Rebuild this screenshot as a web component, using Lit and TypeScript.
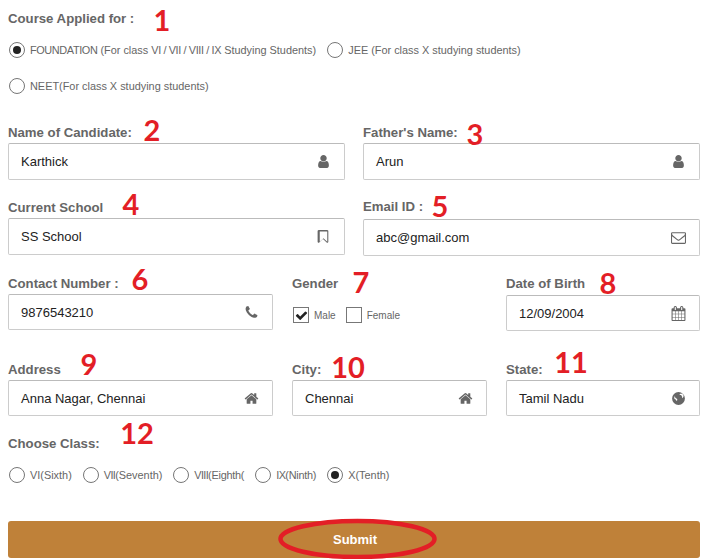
import { LitElement, html, css, svg } from "lit";
import { customElement } from "lit/decorators.js";

// font-awesome 4 glyphs, 1792 grid
const ICONS: Record<string, unknown> = {
  user: svg`<path d="M1536 1399q0 109-62.5 187t-150.5 78h-854q-88 0-150.5-78t-62.5-187q0-85 8.5-160.5t31.5-152 58.5-131 94-89 134.5-34.5q131 128 313 128t313-128q76 0 134.5 34.5t94 89 58.5 131 31.5 152 8.5 160.5zm-256-887q0 159-112.5 271.5t-271.5 112.5-271.5-112.5-112.5-271.5 112.5-271.5 271.5-112.5 271.5 112.5 112.5 271.5z"/>`,
  bookmark: svg`<path d="M1344 288h-896v1242l448-430 89 85 359 345v-1242zm12-160q23 0 44 9 33 13 52.5 41t19.5 62v1289q0 34-19.5 62t-52.5 41q-19 8-44 8-48 0-83-32l-441-424-441 424q-36 33-83 33-23 0-44-9-33-13-52.5-41t-19.5-62v-1289q0-34 19.5-62t52.5-41q21-9 44-9h1048z"/>`,
  phone: svg`<path d="M1600 1240q0 27-10 70.5t-21 68.5q-21 50-122 106-94 51-186 51-27 0-53-3.5t-57.5-12.5-47-14.5-55.5-20.5-49-18q-98-35-175-83-127-79-264-216t-216-264q-48-77-83-175-3-9-18-49t-20.5-55.5-14.5-47-12.5-57.5-3.5-53q0-92 51-186 56-101 106-122 25-11 68.5-21t70.5-10q14 0 21 3 18 6 53 76 11 19 30 54t35 63.5 31 53.5q3 4 17.5 25t21.5 35.5 7 28.5q0 20-28.5 50t-62 55-62 53-28.5 46q0 9 5 22.5t8.5 20.5 14 24 11.5 19q76 137 174 235t235 174q2 1 19 11.5t24 14 20.5 8.5 22.5 5q18 0 46-28.5t53-62 55-62 50-28.5q14 0 28.5 7t35.5 21.5 25 17.5q25 15 53.5 31t63.5 35 54 30q70 35 76 53 3 7 3 21z"/>`,
  envelope: svg`<path d="M1664 1504v-768q-32 36-69 66-268 206-426 338-51 43-83 67t-86.5 48.5-102.5 24.5h-2q-48 0-102.5-24.5t-86.5-48.5-83-67q-158-132-426-338-37-30-69-66v768q0 13 9.5 22.5t22.5 9.5h1472q13 0 22.5-9.5t9.5-22.5zm0-1051v-24.5l-.5-13-3-12.5-5.5-9-9-7.5-14-2.5h-1472q-13 0-22.5 9.5t-9.5 22.5q0 168 147 284 193 152 401 317 6 5 35 29.5t46 37.5 44.5 31.5 50.5 27.5 43 9h2q20 0 43-9t50.5-27.5 44.5-31.5 46-37.5 35-29.5q208-165 401-317 54-43 100.5-115.5t46.5-131.5zm128-37v1088q0 66-47 113t-113 47h-1472q-66 0-113-47t-47-113v-1088q0-66 47-113t113-47h1472q66 0 113 47t47 113z"/>`,
  calendar: svg`<path d="M192 1664h288v-288h-288v288zm352 0h320v-288h-320v288zm-352-352h288v-320h-288v320zm352 0h320v-320h-320v320zm-352-384h288v-288h-288v288zm736 736h320v-288h-320v288zm-384-736h320v-288h-320v288zm768 736h288v-288h-288v288zm-384-352h320v-320h-320v320zm-352-864v-288q0-13-9.5-22.5t-22.5-9.5h-64q-13 0-22.5 9.5t-9.5 22.5v288q0 13 9.5 22.5t22.5 9.5h64q13 0 22.5-9.5t9.5-22.5zm736 864h288v-320h-288v320zm-384-384h320v-288h-320v288zm384 0h288v-288h-288v288zm32-480v-288q0-13-9.5-22.5t-22.5-9.5h-64q-13 0-22.5 9.5t-9.5 22.5v288q0 13 9.5 22.5t22.5 9.5h64q13 0 22.5-9.5t9.5-22.5zm384-64v1280q0 52-38 90t-90 38h-1408q-52 0-90-38t-38-90v-1280q0-52 38-90t90-38h128v-96q0-66 47-113t113-47h64q66 0 113 47t47 113v96h384v-96q0-66 47-113t113-47h64q66 0 113 47t47 113v96h128q52 0 90 38t38 90z"/>`,
  home: svg`<path d="M1472 992v480q0 26-19 45t-45 19h-384v-384h-256v384h-384q-26 0-45-19t-19-45v-480q0-1 .5-3t.5-3l575-474 575 474q1 2 1 6zm223-69l-62 74q-8 9-21 11h-3q-13 0-21-7l-692-577-692 577q-12 8-24 7-13-2-21-11l-62-74q-8-10-7-23.5t11-21.5l719-599q32-26 76-26t76 26l244 204v-195q0-14 9-23t23-9h192q14 0 23 9t9 23v408l219 182q10 8 11 21.5t-7 23.5z"/>`,
  globe: svg`<path fill-rule="evenodd" d="M896 128a768 768 0 1 1 0 1536a768 768 0 1 1 0-1536zM1100 330q-110 40-70 130q70 40 150 20q30 70 100 70q-10 90 50 150q-20 100 30 170q120-110 150-280q-30-170-170-260q-110-30-240 0zM430 640q-60 120-30 260q60 100 180 120q-10 80 70 140q80 10 90-50q-30-80 20-130q-30-70-130-80q-40-70-110-60q10-110-90-200z"/>`,
};

type Field = { label: string; value: string; icon: string; cls?: string };

@customElement("app-root")
export class AppRoot extends LitElement {
  static styles = css`
    :host {
      display: block;
      position: relative;
      width: 701px;
      height: 559px;
      overflow: hidden;
      background: #fff;
      font-family: "Liberation Sans", Arial, sans-serif;
    }
    .form {
      padding: 10px 1px 0 8px;
    }
    .label {
      font-size: 13.2px;
      font-weight: bold;
      line-height: 18px;
      color: #666;
      margin-bottom: 1px;
    }
    .radios {
      display: flex;
      flex-wrap: wrap;
      column-gap: 10px;
      row-gap: 16px;
      margin-top: 12px;
    }
    .radio {
      display: flex;
      align-items: center;
      height: 20px;
      padding-left: 1px;
      font-size: 10.9px;
      color: #666;
      white-space: pre;
    }
    .soft {
      letter-spacing: -0.38px;
    }
    .tight {
      letter-spacing: -0.65px;
    }
    .squeeze {
      letter-spacing: -0.25px;
    }
    .circle {
      box-sizing: border-box;
      width: 16px;
      height: 16px;
      border: 1px solid #767676;
      border-radius: 50%;
      margin-right: 5px;
      display: flex;
      align-items: center;
      justify-content: center;
    }
    .circle.on::after {
      content: "";
      width: 8px;
      height: 8px;
      border-radius: 50%;
      background: #222;
    }
    .row {
      display: grid;
      column-gap: 18px;
    }
    .two {
      grid-template-columns: 337px 337px;
    }
    .three {
      grid-template-columns: 265px 195px 194px;
      column-gap: 19px;
    }
    .r1 { margin-top: 28px; }
    .r2 { margin-top: 19px; }
    .r3 { margin-top: 19px; }
    .r4 { margin-top: 30px; }
    .field {
      box-sizing: border-box;
      display: flex;
      align-items: center;
      justify-content: space-between;
      height: 36px;
      padding: 0 13px 0 12px;
      border: 1px solid #ccc;
      border-top-color: #bbb;
      border-radius: 2px;
      font-size: 13px;
      color: #222;
    }
    .tall .field {
      height: 37px;
    }
    .icon {
      width: 15px;
      height: 15px;
      fill: #666;
      flex: none;
    }
    .email .label {
      margin-top: -1px;
      margin-bottom: 3px;
    }
    .dob .label {
      margin-bottom: 2px;
    }
    .checks {
      display: flex;
      align-items: center;
      margin-top: 14px;
      padding-left: 1px;
      font-size: 10px;
      color: #666;
    }
    .box {
      box-sizing: border-box;
      width: 16px;
      height: 16px;
      border: 1px solid #777;
      margin-right: 5px;
      display: flex;
      align-items: center;
      justify-content: center;
    }
    .box svg {
      width: 13px;
      height: 13px;
      fill: #222;
    }
    .checks span.txt {
      margin-right: 10px;
    }
    .class-label {
      margin-top: 19px;
      margin-bottom: 0;
    }
    .submit {
      box-sizing: border-box;
      margin-top: 36px;
      height: 37px;
      padding-left: 2px;
      border-radius: 3px;
      background: #bf8139;
      color: #fff;
      font-size: 13px;
      font-weight: bold;
      display: flex;
      align-items: center;
      justify-content: center;
    }
    /* review marks drawn over the form */
    .mark {
      position: absolute;
      font-family: Lato, sans-serif;
      font-weight: bold;
      font-size: 29px;
      line-height: 28px;
      color: #e31e26;
      transform: translate(-50%, -50%);
    }
    .ring {
      position: absolute;
      left: 275px;
      top: 516px;
      width: 164px;
      height: 43px;
      fill: none;
      stroke: #e31e26;
      stroke-width: 4.5;
    }
  `;

  marks = [
    { n: "1", x: 162, y: 20 },
    { n: "2", x: 152, y: 130 },
    { n: "3", x: 475, y: 134 },
    { n: "4", x: 131, y: 204 },
    { n: "5", x: 440, y: 206 },
    { n: "6", x: 140, y: 279 },
    { n: "7", x: 361, y: 282 },
    { n: "8", x: 608, y: 283 },
    { n: "9", x: 89, y: 364 },
    { n: "10", x: 348, y: 367 },
    { n: "11", x: 571, y: 362 },
    { n: "12", x: 137, y: 433 },
  ];

  renderField(f: Field) {
    return html`
      <div class=${f.cls ?? ""}>
        <div class="label">${f.label}</div>
        <div class="field">
          <span>${f.value}</span>
          <svg class="icon" viewBox="0 0 1792 1792">${ICONS[f.icon]}</svg>
        </div>
      </div>
    `;
  }

  renderRadio(text: unknown, on = false) {
    return html`<div class="radio"><span class="circle ${on ? "on" : ""}"></span><span>${text}</span></div>`;
  }

  render() {
    return html`
      <div class="form">
        <div class="label">Course Applied for :</div>
        <div class="radios">
          ${this.renderRadio(
            html`<span class="soft">FOUNDATION</span> (For class <span class="soft">VI / VII / VIII / IX</span> Studying Students)`,
            true
          )}
          ${this.renderRadio("JEE (For class X studying students)")}
          ${this.renderRadio("NEET(For class X studying students)")}
        </div>

        <div class="row two tall r1">
          ${this.renderField({ label: "Name of Candidate:", value: "Karthick", icon: "user" })}
          ${this.renderField({ label: "Father's Name:", value: "Arun", icon: "user" })}
        </div>
        <div class="row two tall r2">
          ${this.renderField({ label: "Current School", value: "SS School", icon: "bookmark" })}
          ${this.renderField({ label: "Email ID :", value: "abc@gmail.com", icon: "envelope", cls: "email" })}
        </div>
        <div class="row three r3">
          ${this.renderField({ label: "Contact Number :", value: "9876543210", icon: "phone" })}
          <div>
            <div class="label">Gender</div>
            <div class="checks">
              <span class="box">
                <svg viewBox="0 0 1792 1792"><path d="M1671 566q0 40-28 68l-724 724-136 136q-28 28-68 28t-68-28l-136-136-362-362q-28-28-28-68t28-68l136-136q28-28 68-28t68 28l294 295 656-657q28-28 68-28t68 28l136 136q28 28 28 68z" /></svg>
              </span>
              <span class="txt">Male</span>
              <span class="box"></span>
              <span class="txt">Female</span>
            </div>
          </div>
          ${this.renderField({ label: "Date of Birth", value: "12/09/2004", icon: "calendar", cls: "dob" })}
        </div>
        <div class="row three r4">
          ${this.renderField({ label: "Address", value: "Anna Nagar, Chennai", icon: "home" })}
          ${this.renderField({ label: "City:", value: "Chennai", icon: "home" })}
          ${this.renderField({ label: "State:", value: "Tamil Nadu", icon: "globe" })}
        </div>

        <div class="label class-label">Choose Class:</div>
        <div class="radios">
          ${this.renderRadio("VI(Sixth)")}
          ${this.renderRadio(html`<span class="tight">VII</span>(Seventh)`)}
          ${this.renderRadio(html`<span class="squeeze"><span class="tight">VIII</span>(Eighth(</span>`)}
          ${this.renderRadio(html`<span class="squeeze"><span class="tight">IX</span>(Ninth)</span>`)}
          ${this.renderRadio("X(Tenth)", true)}
        </div>

        <div class="submit">Submit</div>
      </div>

      ${this.marks.map(
        (m) => html`<span class="mark" style="left:${m.x}px;top:${m.y}px">${m.n}</span>`
      )}
      <svg class="ring" viewBox="0 0 164 43"><ellipse cx="82.5" cy="23" rx="77" ry="18" /></svg>
    `;
  }
}
